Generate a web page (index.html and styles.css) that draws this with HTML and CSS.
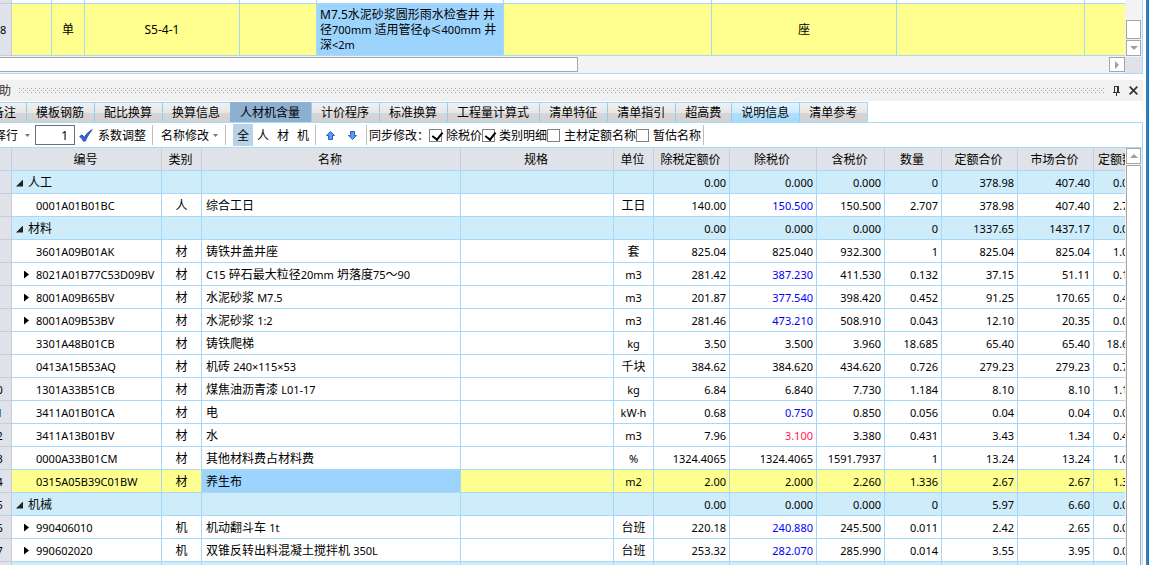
FILE: index.html
```
<!DOCTYPE html>
<html lang="zh-CN">
<head>
<meta charset="utf-8">
<title>人材机含量</title>
<link rel="stylesheet" href="styles.css">
</head>
<body>
<div class="window">
  <section class="upper">
    <div class="upper-main">
      <div class="upper-grid">
        <table class="bill">
          <colgroup><col class="w12"><col class="w40"><col class="w33"><col class="w155"><col class="w77"><col class="w187"><col class="w208"><col class="w185"><col class="w188"><col></colgroup>
          <tbody>
            <tr class="sliver"><td class="idx"></td><td></td><td></td><td></td><td></td><td></td><td></td><td></td><td></td><td></td></tr>
            <tr class="current"><td class="idx">8</td><td></td><td>单</td><td>S5-4-1</td><td></td><td class="picked">M7.5水泥砂浆圆形雨水检查井 井径<span class="latin">700mm</span> 适用管径<span class="latin">φ≤400mm</span> 井深<span class="latin">&lt;2m</span></td><td></td><td>座</td><td></td><td></td></tr>
          </tbody>
        </table>
      </div>
      <div class="hscroll">
        <div class="hthumb"></div>
        <button class="sbtn hright" aria-label="向右滚动"><svg width="4" height="8" viewBox="0 0 4 8"><path d="M0 0L4 4L0 8Z" fill="#a0a0a0"/></svg></button>
      </div>
    </div>
    <div class="vscroll upper-scroll">
      <div class="track-top"></div>
      <div class="vthumb short"></div>
      <button class="sbtn" aria-label="向下滚动"><svg width="8" height="4" viewBox="0 0 8 4"><path d="M0 0H8L4 4Z" fill="#a0a0a0"/></svg></button>
      <div class="corner"></div>
    </div>
  </section>

  <section class="panel">
    <header class="titlebar">
      <span class="title">辅助</span>
      <svg class="grip" height="6" aria-hidden="true"><defs><pattern id="dots" width="4" height="4" patternUnits="userSpaceOnUse"><path d="M0 0h1v1h-1zM2 2h1v1h-1z" fill="#a3a3a3"/></pattern></defs><rect width="100%" height="5" fill="url(#dots)"/></svg>
      <button class="tool" aria-label="固定"><svg width="7" height="10" viewBox="0 0 7 10" shape-rendering="crispEdges"><path d="M1 0H6V6H7V7H4V10H3V7H0V6H1ZM2 1V6H4V1Z" fill="#333" fill-rule="evenodd"/></svg></button>
      <button class="tool" aria-label="关闭"><svg width="9" height="9" viewBox="0 0 9 9"><path d="M.7.7L8.300 8.300M8.300.7L.7 8.300" stroke="#333" stroke-width="1.700"/></svg></button>
    </header>

    <nav class="tabs">
      <button class="tab">备注</button><button class="tab">模板钢筋</button><button class="tab">配比换算</button><button class="tab">换算信息</button><button class="tab selected">人材机含量</button><button class="tab">计价程序</button><button class="tab">标准换算</button><button class="tab">工程量计算式</button><button class="tab">清单特征</button><button class="tab">清单指引</button><button class="tab">超高费</button><button class="tab hot">说明信息</button><button class="tab last">清单参考</button>
    </nav>

    <div class="toolbar">
      <button class="drop first">选择行<svg width="5" height="3" viewBox="0 0 5 3"><path d="M0 0H5L2.500 3Z" fill="#777"/></svg></button>
      <input class="count" type="text" value="1" aria-label="选择行数">
      <button class="act"><svg width="14" height="13" viewBox="0 0 14 13"><path d="M.7 7.500L3 5.800L5.300 8.400C7.200 5 9.500 2.500 13.300.7C10.500 4 8.300 7.500 6.400 12L4.400 12.200C3.500 10.300 2.300 8.800.7 7.500Z" fill="#3767dc" stroke="#173a9c" stroke-width=".8"/></svg>系数调整</button>
      <span class="sep"></span>
      <button class="drop">名称修改<svg width="5" height="3" viewBox="0 0 5 3"><path d="M0 0H5L2.500 3Z" fill="#777"/></svg></button>
      <span class="sep"></span>
      <div class="filters"><button class="filter on">全</button><button class="filter">人</button><button class="filter">材</button><button class="filter">机</button></div>
      <span class="sep"></span>
      <div class="arrows">
        <button class="icon" aria-label="上移"><svg width="9" height="9" viewBox="0 0 9 9"><path d="M4.500.5L8.500 4.500H6.500V8.500H2.500V4.500H.5Z" fill="#5c9af5" stroke="#2c5fcc"/></svg></button>
        <button class="icon" aria-label="下移"><svg width="9" height="9" viewBox="0 0 9 9"><path d="M4.500 8.500L8.500 4.500H6.500V.5H2.500V4.500H.5Z" fill="#5c9af5" stroke="#2c5fcc"/></svg></button>
      </div>
      <span class="sep"></span>
      <div class="sync"><span class="sync-label">同步修改：</span><label class="check"><input type="checkbox" checked>除税价</label><label class="check"><input type="checkbox" checked>类别明细</label><label class="check"><input type="checkbox">主材定额名称</label><label class="check"><input type="checkbox">暂估名称</label></div>
      <span class="sep"></span>
    </div>

    <div class="lower">
      <div class="lower-grid">
        <table class="items">
          <colgroup><col class="w30"><col class="w150"><col class="w40"><col class="w259"><col class="w153"><col class="w40"><col class="w76"><col class="w87"><col class="w68"><col class="w57"><col class="w76"><col class="w76"><col class="w76"></colgroup>
          <thead><tr><th></th><th>编号</th><th>类别</th><th>名称</th><th>规格</th><th>单位</th><th>除税定额价</th><th>除税价</th><th>含税价</th><th>数量</th><th>定额合价</th><th>市场合价</th><th class="cut">定额数量</th></tr></thead>
          <tbody>
            <tr class="group"><th>1</th><td class="head"><i class="open"></i>人工</td><td></td><td></td><td></td><td></td><td>0.00</td><td>0.000</td><td>0.000</td><td>0</td><td>378.98</td><td>407.40</td><td>0.000</td></tr>
            <tr><th>2</th><td>0001A01B01BC</td><td>人</td><td>综合工日</td><td></td><td>工日</td><td>140.00</td><td class="blue">150.500</td><td>150.500</td><td>2.707</td><td>378.98</td><td>407.40</td><td>2.707</td></tr>
            <tr class="group"><th>3</th><td class="head"><i class="open"></i>材料</td><td></td><td></td><td></td><td></td><td>0.00</td><td>0.000</td><td>0.000</td><td>0</td><td>1337.65</td><td>1437.17</td><td>0.000</td></tr>
            <tr><th>4</th><td>3601A09B01AK</td><td>材</td><td>铸铁井盖井座</td><td></td><td>套</td><td>825.04</td><td>825.040</td><td>932.300</td><td>1</td><td>825.04</td><td>825.04</td><td>1.000</td></tr>
            <tr><th>5</th><td class="kids"><i class="shut"></i>8021A01B77C53D09BV</td><td>材</td><td><span class="latin">C15</span> 碎石最大粒径<span class="latin">20mm</span> 坍落度<span class="latin">75</span>～<span class="latin">90</span></td><td></td><td class="latin">m3</td><td>281.42</td><td class="blue">387.230</td><td>411.530</td><td>0.132</td><td>37.15</td><td>51.11</td><td>0.132</td></tr>
            <tr><th>6</th><td class="kids"><i class="shut"></i>8001A09B65BV</td><td>材</td><td>水泥砂浆 <span class="latin">M7.5</span></td><td></td><td class="latin">m3</td><td>201.87</td><td class="blue">377.540</td><td>398.420</td><td>0.452</td><td>91.25</td><td>170.65</td><td>0.452</td></tr>
            <tr><th>7</th><td class="kids"><i class="shut"></i>8001A09B53BV</td><td>材</td><td>水泥砂浆 <span class="latin">1:2</span></td><td></td><td class="latin">m3</td><td>281.46</td><td class="blue">473.210</td><td>508.910</td><td>0.043</td><td>12.10</td><td>20.35</td><td>0.043</td></tr>
            <tr><th>8</th><td>3301A48B01CB</td><td>材</td><td>铸铁爬梯</td><td></td><td class="latin">kg</td><td>3.50</td><td>3.500</td><td>3.960</td><td>18.685</td><td>65.40</td><td>65.40</td><td>18.685</td></tr>
            <tr><th>9</th><td>0413A15B53AQ</td><td>材</td><td>机砖 <span class="latin">240×115×53</span></td><td></td><td>千块</td><td>384.62</td><td>384.620</td><td>434.620</td><td>0.726</td><td>279.23</td><td>279.23</td><td>0.726</td></tr>
            <tr><th>10</th><td>1301A33B51CB</td><td>材</td><td>煤焦油沥青漆 <span class="latin">L01-17</span></td><td></td><td class="latin">kg</td><td>6.84</td><td>6.840</td><td>7.730</td><td>1.184</td><td>8.10</td><td>8.10</td><td>1.184</td></tr>
            <tr><th>11</th><td>3411A01B01CA</td><td>材</td><td>电</td><td></td><td class="latin">kW·h</td><td>0.68</td><td class="blue">0.750</td><td>0.850</td><td>0.056</td><td>0.04</td><td>0.04</td><td>0.056</td></tr>
            <tr><th>12</th><td>3411A13B01BV</td><td>材</td><td>水</td><td></td><td class="latin">m3</td><td>7.96</td><td class="red">3.100</td><td>3.380</td><td>0.431</td><td>3.43</td><td>1.34</td><td>0.431</td></tr>
            <tr><th>13</th><td>0000A33B01CM</td><td>材</td><td>其他材料费占材料费</td><td></td><td class="latin">%</td><td>1324.4065</td><td>1324.4065</td><td>1591.7937</td><td>1</td><td>13.24</td><td>13.24</td><td>1.000</td></tr>
            <tr class="current"><th>14</th><td>0315A05B39C01BW</td><td>材</td><td class="picked">养生布</td><td></td><td class="latin">m2</td><td>2.00</td><td>2.000</td><td>2.260</td><td>1.336</td><td>2.67</td><td>2.67</td><td>1.336</td></tr>
            <tr class="group"><th>15</th><td class="head"><i class="open"></i>机械</td><td></td><td></td><td></td><td></td><td>0.00</td><td>0.000</td><td>0.000</td><td>0</td><td>5.97</td><td>6.60</td><td>0.000</td></tr>
            <tr><th>16</th><td class="kids"><i class="shut"></i>990406010</td><td>机</td><td>机动翻斗车 <span class="latin">1t</span></td><td></td><td>台班</td><td>220.18</td><td class="blue">240.880</td><td>245.500</td><td>0.011</td><td>2.42</td><td>2.65</td><td>0.011</td></tr>
            <tr><th>17</th><td class="kids"><i class="shut"></i>990602020</td><td>机</td><td>双锥反转出料混凝土搅拌机 <span class="latin">350L</span></td><td></td><td>台班</td><td>253.32</td><td class="blue">282.070</td><td>285.990</td><td>0.014</td><td>3.55</td><td>3.95</td><td>0.014</td></tr>
            <tr class="group"><th></th><td></td><td></td><td></td><td></td><td></td><td></td><td></td><td></td><td></td><td></td><td></td><td></td></tr>
          </tbody>
        </table>
      </div>
      <div class="vscroll">
        <button class="sbtn" aria-label="向上滚动"><svg width="8" height="4" viewBox="0 0 8 4"><path d="M0 4H8L4 0Z" fill="#a0a0a0"/></svg></button>
        <div class="vthumb tall"></div>
      </div>
    </div>
  </section>
</div>
</body>
</html>
```
FILE: styles.css
```
* { box-sizing: border-box; }
html, body { height: 100%; }
body {
  margin: 0;
  overflow: hidden;
  background: #fff;
  color: #000;
  font: 12px/15px "Noto Sans", "Noto Sans CJK SC", sans-serif;
}
button {
  margin: 0;
  padding: 0;
  border: 0;
  background: none;
  color: inherit;
  font: inherit;
  white-space: nowrap;
}
svg { display: block; flex: none; }
.latin { font-size: 11px; }

.window {
  display: flex;
  flex-direction: column;
  height: 100%;
  padding-right: 6px;
  background: linear-gradient(90deg, #3a7fb5 2px, #0078d7 2px) no-repeat right / 3px 100%;
  overflow: hidden;
}

/* column widths */
.w12 { width: 12px; }
.w30 { width: 30px; }
.w33 { width: 33px; }
.w40 { width: 40px; }
.w57 { width: 57px; }
.w68 { width: 68px; }
.w76 { width: 76px; }
.w77 { width: 77px; }
.w87 { width: 87px; }
.w150 { width: 150px; }
.w153 { width: 153px; }
.w155 { width: 155px; }
.w185 { width: 185px; }
.w187 { width: 187px; }
.w188 { width: 188px; }
.w208 { width: 208px; }
.w259 { width: 259px; }

table {
  table-layout: fixed;
  border-collapse: separate;
  border-spacing: 0;
}
td, th {
  padding: 0;
  border-right: 1px solid #a6d8fa;
  border-bottom: 1px solid #a6d8fa;
  font-weight: 400;
  white-space: nowrap;
  overflow: hidden;
}

/* upper grid */
.upper {
  display: flex;
  flex: none;
  border-right: 1px solid #a6dafa;
  border-bottom: 1px solid #a6dafa;
}
.upper-main { flex: 1; min-width: 0; }
.bill { width: 100%; }
.bill td { text-align: center; }
.bill td:last-child { border-right: 0; }
.sliver td { height: 4px; }
.bill .current td { height: 52px; }
.current td { background: #ffff8f; }
.bill td.idx { background: #dfe2e8; border-color: #c6cdd9; text-align: left; font-size: 11px; }
.bill td.picked {
  padding: 0 3px;
  text-align: left;
  white-space: normal;
}
.current td.picked { background: #9dd4fd; }

.hscroll {
  display: flex;
  justify-content: space-between;
  height: 17px;
  padding-top: 1px;
  background: #f3f3f3;
}
.hthumb { width: 578px; height: 15px; background: #fff; border: 1px solid #a6a6a6; border-left: 0; }
.sbtn {
  display: flex;
  align-items: center;
  justify-content: center;
  flex: none;
  width: 15px;
  height: 16px;
  border: 1px solid #a6a6a6;
  background: #fff;
}
.hright { width: 16px; height: 15px; }
.vscroll {
  display: flex;
  flex: none;
  flex-direction: column;
  align-items: center;
  gap: 1px;
  width: 17px;
  background: #f3f3f3;
}
.track-top { height: 19px; }
.vthumb { width: 15px; background: #fff; border: 1px solid #a6a6a6; }
.short { height: 19px; }
.upper-scroll { gap: 1px; }
.corner { flex: 1; width: 100%; background: #dfe2e8; }
.tall { flex: 1; border-bottom: 0; }

/* docked panel */
.panel {
  display: flex;
  flex: 1;
  flex-direction: column;
  min-height: 0;
  margin-top: 6px;
}
.titlebar {
  display: flex;
  flex: none;
  align-items: center;
  gap: 8px;
  height: 21px;
  padding-right: 5px;
  background: #f1f1f1;
}
.title { margin-left: -13px; color: #333; }
.grip { flex: 1; width: 0; }
.tool { display: flex; align-items: center; justify-content: center; width: 9px; height: 15px; }

.tabs { display: flex; flex: none; margin: 1px 0 0 -18px; }
.tab {
  height: 20px;
  padding: 0 10px 0 9px;
  border-top: 1px solid #a6d8f6;
  border-left: 1px solid #90cef6;
  background: linear-gradient(#f0f0f0, #e6e6e6 50%, #d6d6d6 51%, #d2d2d2);
}
.selected { border-color: #8db2d3; background: #8eb0d0; padding-right: 11px; }
.hot { background: linear-gradient(#e2f4fd, #cdebfc 50%, #b4e0fa 51%, #a5daf8); }
.last { border-right: 1px solid #a6d8f6; }

.toolbar {
  display: flex;
  flex: none;
  align-items: center;
  height: 25px;
  border-top: 1px solid #a6dafa;
  border-right: 1px solid #a6dafa;
}
.drop, .act, .arrows, .sync, .check, .filters { display: flex; align-items: center; }
.drop { gap: 4px; padding: 0 7px 0 8px; }
.first { margin-left: -26px; padding: 0 5px 0 8px; gap: 7px; }
.count {
  width: 40px;
  height: 20px;
  padding: 0 6px;
  border: 1px solid #6f6f6f;
  background: #fff;
  font: inherit;
  text-align: right;
}
.act { gap: 5px; padding: 0 6px 0 4px; }
.sep { width: 1px; height: 20px; background: #bdbdbd; }
.filters { padding: 0 2px 0 7px; }
.filter { width: 20px; height: 22px; }
.on { background: #b9d2e8; }
.arrows { gap: 13px; padding: 0 9px 0 10px; }
.sync { padding: 0 2px; }
.sync-label { width: 60px; }
.check { gap: 4px; }
.check input {
  display: flex;
  appearance: none;
  width: 13px;
  height: 13px;
  margin: 0;
  border: 1px solid #808080;
  background: #fff;
}
.check input:checked::after {
  content: "";
  width: 5px;
  height: 8px;
  margin: 0 0 0 4px;
  border: solid #000;
  border-width: 0 2px 2px 0;
  transform: rotate(38deg);
}

/* lower grid */
.lower {
  display: flex;
  flex: 1;
  min-height: 0;
  border-top: 1px solid #a6dafa;
  border-right: 1px solid #a6dafa;
}
.lower-grid { flex: 1; min-width: 0; overflow: hidden; }
.items { width: 1188px; margin-left: -18px; }
.items td, .items th { height: 23px; }
.items thead th { padding-right: 2px; background: #dfe2e8; border-color: #c6cdd9; border-bottom-color: #a6d8fa; }
.items tbody th { background: #dfe2e8; border-color: #c6cdd9; font-size: 11px; }
.items .cut { padding-left: 4px; text-align: left; }
.items td:nth-child(2) { padding-left: 24px; font-size: 11px; }
.items td.head { padding-left: 4px; font-size: 12px; }
.items td.kids { padding-left: 12px; }
.items td:nth-child(3), .items td:nth-child(6) { text-align: center; }
.items td:nth-child(4) { padding-left: 4px; }
.items td:nth-child(n+7) { padding-right: 3px; text-align: right; font-size: 11px; }
.items td:nth-child(13) { padding-right: 28px; }
.group td { background: #ceecf9; }
.items td.blue { color: #0000f8; }
.items td.red { color: #ff2050; }
.open, .shut { display: inline-block; }
.open {
  width: 7px;
  height: 7px;
  margin-right: 5px;
  background: #222;
  clip-path: polygon(100% 0, 100% 100%, 0 100%);
}
.shut {
  width: 5px;
  height: 8px;
  margin-right: 7px;
  background: #000;
  clip-path: polygon(0 0, 100% 50%, 0 100%);
}
```
